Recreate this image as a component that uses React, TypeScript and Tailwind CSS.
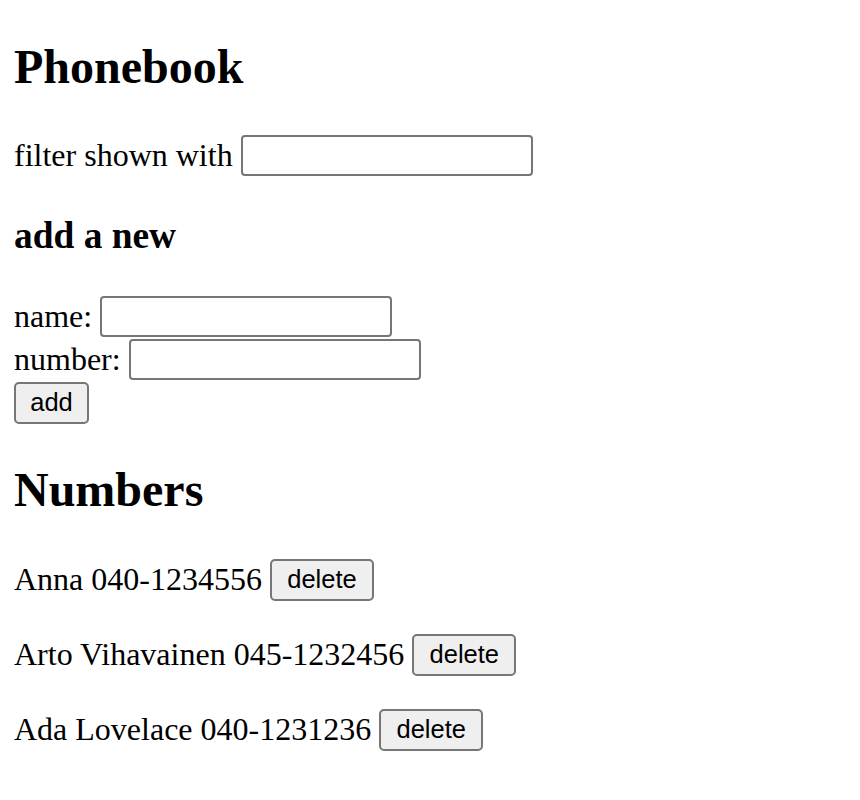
import { useState } from 'react';

interface Person {
  name: string;
  number: string;
}

const initialPersons: Person[] = [
  { name: 'Anna', number: '040-1234556' },
  { name: 'Arto Vihavainen', number: '045-1232456' },
  { name: 'Ada Lovelace', number: '040-1231236' },
];

const inputClass =
  'ml-[8px] h-[41px] w-[292px] rounded-[4px] border-[2px] border-[#767676] bg-white px-[4px] outline-none';

const buttonClass =
  "h-[42px] rounded-[5px] border-[2px] border-[#767676] bg-[#efefef] text-[25.5px] leading-none text-black [font-family:'Liberation_Sans',Arial,sans-serif]";

export default function App() {
  const [persons, setPersons] = useState<Person[]>(initialPersons);
  const [filter, setFilter] = useState('');
  const [newName, setNewName] = useState('');
  const [newNumber, setNewNumber] = useState('');

  const shown = persons.filter((p) =>
    p.name.toLowerCase().includes(filter.toLowerCase()),
  );

  const addPerson = (e: React.FormEvent) => {
    e.preventDefault();
    if (!newName) return;
    setPersons(persons.concat({ name: newName, number: newNumber }));
    setNewName('');
    setNewNumber('');
  };

  return (
    <div className="min-h-screen bg-white px-[14px] pb-[14px] pt-px text-[32px] text-black [font-family:'Liberation_Serif','Times_New_Roman',serif]">
      <h2 className="mt-[39px] mb-[38px] text-[48px] font-bold leading-[54px]">
        Phonebook
      </h2>

      {/* filter */}
      <div className="flex h-[47px] items-center leading-[43px]">
        <span>filter shown with</span>
        <input
          className={inputClass}
          value={filter}
          onChange={(e) => setFilter(e.target.value)}
        />
      </div>

      <h3 className="mt-[36px] mb-[38px] text-[37.4px] font-bold leading-[42px]">
        add a new
      </h3>

      <form onSubmit={addPerson}>
        <div className="flex h-[43px] items-center leading-[43px]">
          <span>name:</span>
          <input
            className={inputClass}
            value={newName}
            onChange={(e) => setNewName(e.target.value)}
          />
        </div>
        <div className="flex h-[43px] items-center leading-[43px]">
          <span>number:</span>
          <input
            className={inputClass}
            value={newNumber}
            onChange={(e) => setNewNumber(e.target.value)}
          />
        </div>
        <div className="flex h-[43px] items-center">
          <button type="submit" className={`${buttonClass} w-[75px]`}>
            add
          </button>
        </div>
      </form>

      <h2 className="mt-[39px] mb-[41px] text-[48px] font-bold leading-[54px]">
        Numbers
      </h2>

      <div className="flex flex-col gap-[31.5px]">
        {shown.map((p) => (
          <div key={p.name} className="flex h-[43.5px] items-center leading-[43px]">
            <span>
              {p.name} {p.number}
            </span>
            <button
              className={`${buttonClass} ml-[8px] w-[104px]`}
              onClick={() => setPersons(persons.filter((x) => x.name !== p.name))}
            >
              delete
            </button>
          </div>
        ))}
      </div>
    </div>
  );
}
